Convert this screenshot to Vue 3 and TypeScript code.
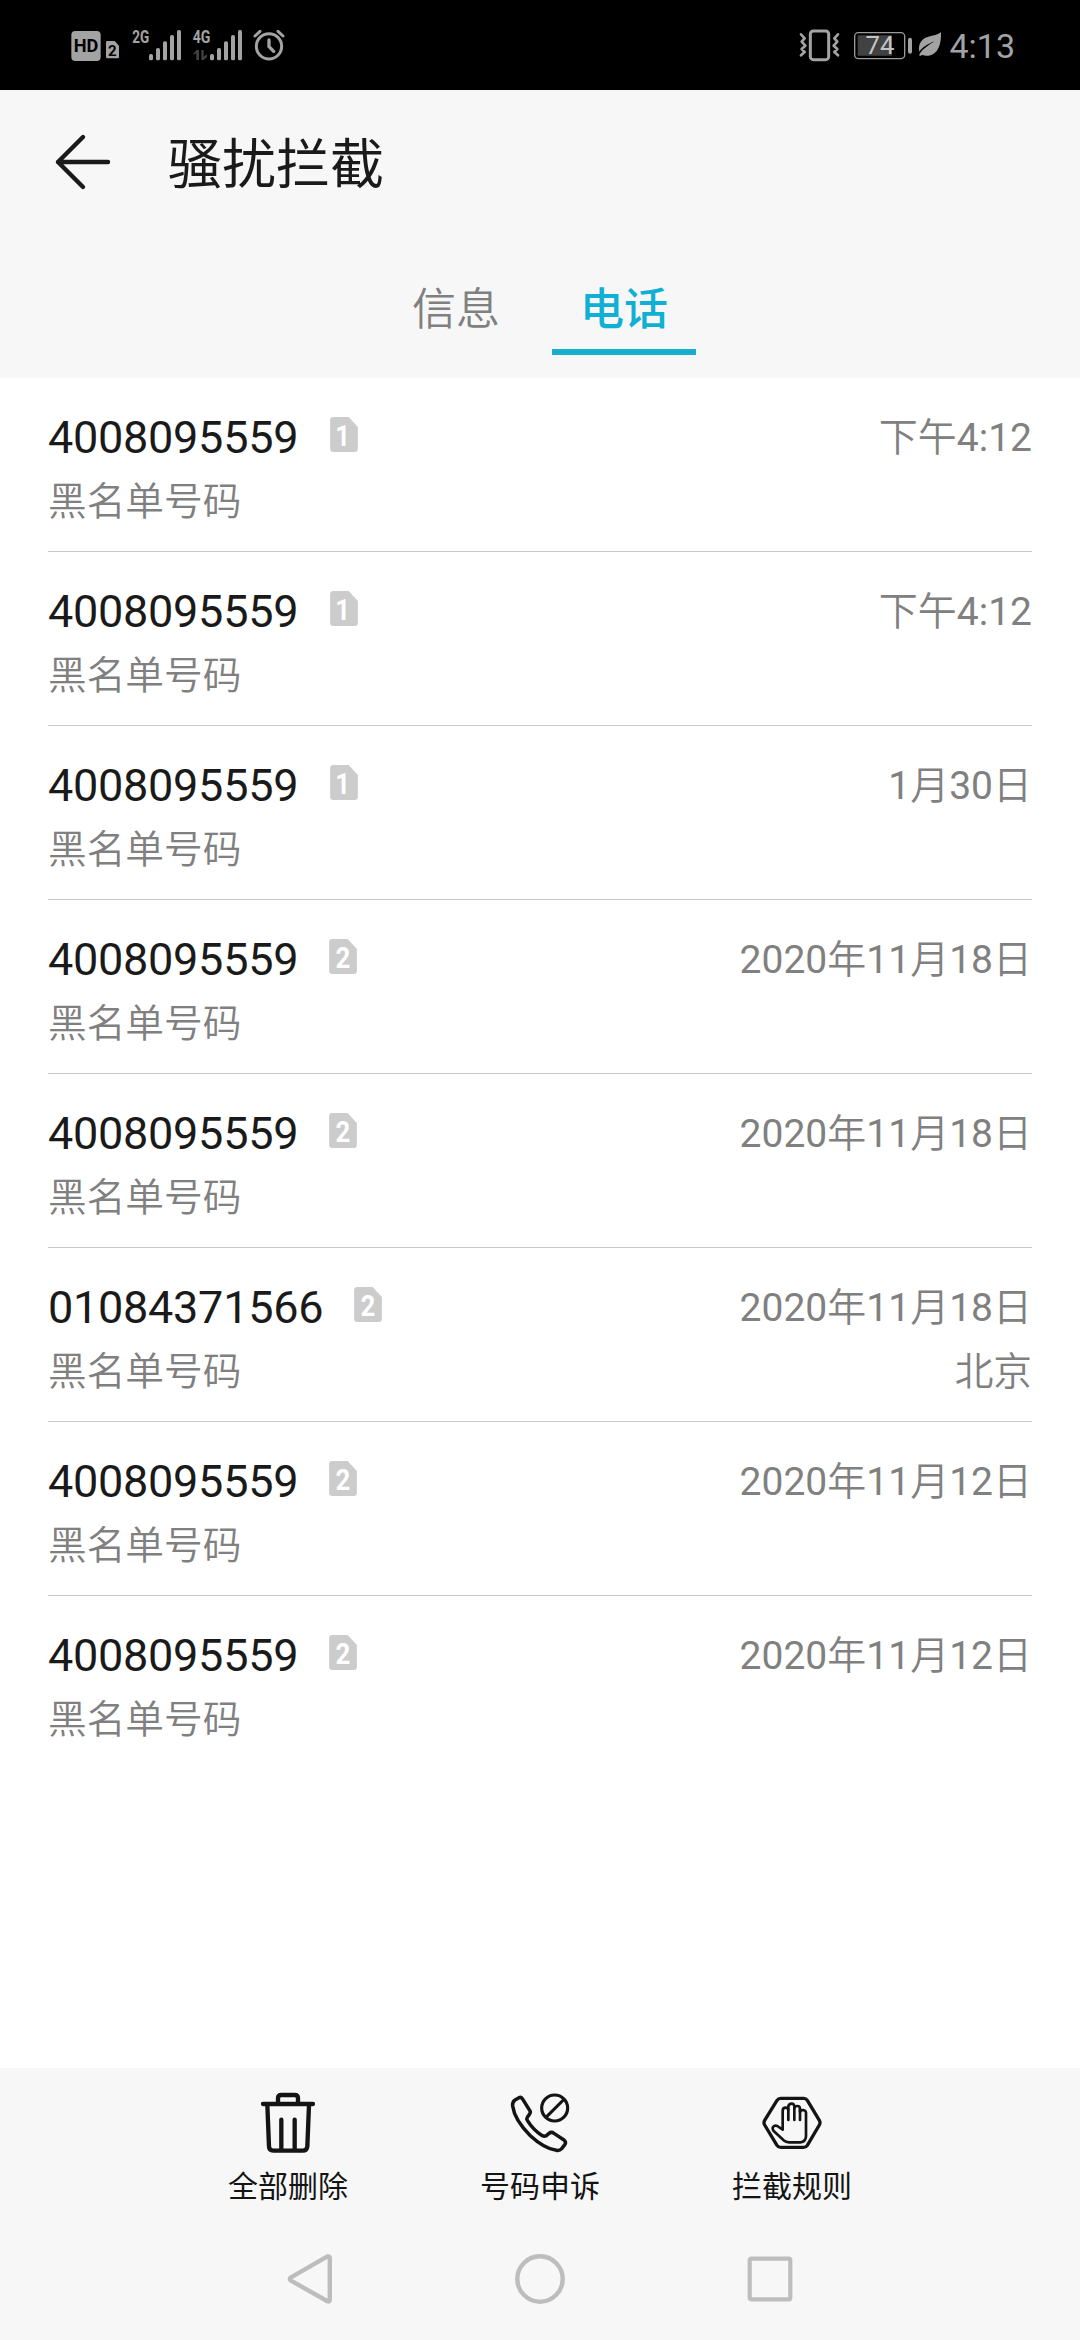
<script setup lang="ts">
interface BlockedCall {
  number: string
  sim: 1 | 2
  reason: string
  time: string
  place?: string
}

const reason = '黑名单号码'
const calls: BlockedCall[] = [
  { number: '4008095559', sim: 1, reason, time: '下午4:12' },
  { number: '4008095559', sim: 1, reason, time: '下午4:12' },
  { number: '4008095559', sim: 1, reason, time: '1月30日' },
  { number: '4008095559', sim: 2, reason, time: '2020年11月18日' },
  { number: '4008095559', sim: 2, reason, time: '2020年11月18日' },
  { number: '01084371566', sim: 2, reason, time: '2020年11月18日', place: '北京' },
  { number: '4008095559', sim: 2, reason, time: '2020年11月12日' },
  { number: '4008095559', sim: 2, reason, time: '2020年11月12日' },
]

// Digits are set in a heavier weight than the Chinese characters around them.
const parts = (time: string): string[] => time.match(/[\d:]+|[^\d:]+/g) ?? []
const isDigits = (part: string): boolean => /^[\d:]/.test(part)

const bars = [
  { x: 0, top: 162 },
  { x: 21, top: 144 },
  { x: 42, top: 124 },
  { x: 63, top: 105 },
  { x: 84, top: 90 },
]
</script>

<template>
  <div class="screen">
    <header class="status">
      <div class="status-left">
        <svg class="hd" viewBox="63 84 90 102">
          <rect x="64" y="93" width="88" height="90" rx="12" fill="#a3a3a3" />
          <text x="108" y="157" text-anchor="middle" font-size="55" font-weight="700" textLength="74" lengthAdjust="spacingAndGlyphs" fill="#000">HD</text>
        </svg>
        <svg class="sim-small" viewBox="165 84 45 102">
          <path d="M172 123h22l13 14v34q0 4-4 4h-31q-4 0-4-4v-44q0-4 4-4z" fill="#a3a3a3" />
          <text x="187" y="167" text-anchor="middle" font-size="45" font-weight="700" fill="#000">2</text>
        </svg>
        <svg class="net net-2g" viewBox="246 84 150 102">
          <text x="247" y="130" font-size="56" font-weight="700" textLength="51" lengthAdjust="spacingAndGlyphs" fill="#a3a3a3">2G</text>
          <rect v-for="b in bars" :key="b.x" :x="297 + b.x" :y="b.top" width="12" :height="181 - b.top" rx="5" fill="#a3a3a3" />
        </svg>
        <svg class="net net-4g" viewBox="426 84 153 102">
          <text x="428" y="130" font-size="56" font-weight="700" textLength="53" lengthAdjust="spacingAndGlyphs" fill="#a3a3a3">4G</text>
          <path d="M430 161l10-11h7v30h-8v-20l-9 4zM454 150h7v20l10-7v8l-10 9h-7z" fill="#404040" />
          <rect v-for="b in bars" :key="b.x" :x="480 + b.x" :y="b.top" width="12" :height="181 - b.top" rx="5" fill="#a3a3a3" />
        </svg>
        <svg class="alarm" viewBox="609 84 96 102" fill="none" stroke="#a3a3a3" stroke-linecap="round" stroke-linejoin="round">
          <circle cx="657" cy="139" r="38" stroke-width="9" />
          <path d="M657 120v20l14 14" stroke-width="10" />
          <path d="M615 108l15-14M699 108l-15-14" stroke-width="9" />
        </svg>
      </div>
      <div class="status-right">
        <svg class="vibrate" viewBox="57 84 123 102" fill="none" stroke="#a3a3a3">
          <rect x="91" y="93" width="55" height="86" rx="9" stroke-width="9" />
          <path d="M63 103l11 12-9 10 11 12-11 10 9 9-11 10M174 103l-11 12 9 10-11 12 11 10-9 9 11 10" stroke-width="8" stroke-linecap="round" stroke-linejoin="round" />
        </svg>
        <svg class="battery" viewBox="219 84 180 102">
          <rect x="224" y="98" width="150" height="78" rx="11" fill="none" stroke="#9a9a9a" stroke-width="4" />
          <rect x="233" y="106" width="103" height="61" rx="2" fill="#414141" />
          <rect x="384" y="113" width="12" height="48" rx="6" fill="#a3a3a3" />
          <text x="300" y="162" text-anchor="middle" font-size="77" fill="#c4c4c4">74</text>
        </svg>
        <svg class="leaf" viewBox="414 84 72 102">
          <path d="M483 97c1 35-8 66-37 70-8 1-13-1-20-2l-6 3c-3-2-2-4-1-6 10-17 28-26 44-38-19 9-36 17-45 31-5-26 9-40 27-45 15-4 28-5 38-13z" fill="#a3a3a3" />
        </svg>
        <span class="clock">4:13</span>
      </div>
    </header>

    <section class="top">
      <div class="title-row">
        <svg class="back" viewBox="0 0 60 60" fill="none" stroke="#1a1a1a" stroke-width="4.4" stroke-linecap="round" stroke-linejoin="round">
          <path d="M55 30H5M30 5L5 30l25 25" />
        </svg>
        <h1>骚扰拦截</h1>
      </div>
      <nav class="tabs">
        <span class="tab">信息</span>
        <span class="tab active">电话</span>
      </nav>
    </section>

    <main class="list">
      <article v-for="(c, i) in calls" :key="i" class="row">
        <div class="line main-line">
          <div class="who">
            <span class="number">{{ c.number }}</span>
            <svg class="sim" :class="{ second: c.sim === 2 }" viewBox="0 0 84 106">
              <path d="M10 0h46l28 30v66q0 10-10 10h-64q-10 0-10-10v-86q0-10 10-10z" fill="#ccc" />
              <text :x="c.sim === 1 ? 38 : 42" y="88" text-anchor="middle" font-size="90" font-weight="700" textLength="45" lengthAdjust="spacingAndGlyphs" fill="#fff">{{ c.sim }}</text>
            </svg>
          </div>
          <span class="time"><span v-for="(part, p) in parts(c.time)" :key="p" :class="{ digits: isDigits(part) }">{{ part }}</span></span>
        </div>
        <div class="line sub-line">
          <span>{{ c.reason }}</span>
          <span v-if="c.place">{{ c.place }}</span>
        </div>
      </article>
    </main>

    <footer class="bottom">
      <div class="actions">
        <button class="action">
          <svg viewBox="138 120 192 198" fill="none" stroke="#141414" stroke-width="13" stroke-linecap="round" stroke-linejoin="round">
            <path d="M159 162H309M204 160V145q0-10 10-10h40q10 0 10 10v15M172 165l5 124q0 13 13 13h88q13 0 14-13l5-124M214 209v91M254 209v91" />
          </svg>
          <span>全部删除</span>
        </button>
        <button class="action">
          <svg viewBox="144 120 192 198" fill="none" stroke="#141414" stroke-width="10.5" stroke-linecap="round" stroke-linejoin="round">
            <path d="M177 143L165 150Q157 155 158 168C162 198 184 230 211 257C238 282 265 297 289 301Q299 303 305 296L315 283Q319 276 312 270L282 250Q274 244 267 250L259 257Q253 260 247 257C229 246 213 229 202 211Q199 206 202 202L209 192Q213 187 209 181L187 146Q183 140 177 143Z" />
            <circle cx="284" cy="174" r="39" stroke-width="9.5" />
            <path d="M260 200L310 150" stroke-width="9.5" />
          </svg>
          <span>号码申诉</span>
        </button>
        <button class="action">
          <svg viewBox="150 120 192 198" fill="none" stroke="#141414" stroke-width="10" stroke-linecap="round" stroke-linejoin="round">
            <path d="M212 145H281Q288 145 292 151L328 211Q332 218 328 225L292 286Q288 292 281 292H212Q205 292 201 286L164 225Q160 218 164 211L201 151Q205 145 212 145Z" />
            <path d="M218 239V182Q219 173 226 173Q234 173 235 180V169Q237 161 245 161Q252 161 253 169V174Q255 168 262 168Q269 168 270 175V186Q272 180 280 180Q287 181 288 188V259Q287 275 271 277H237Q228 276 221 271L191 243Q186 236 189 231Q194 224 202 228L218 239" stroke-width="8" />
            <path d="M235 179V210M253 172V210M270 179V210" stroke-width="8" />
          </svg>
          <span>拦截规则</span>
        </button>
      </div>
      <div class="system-nav">
        <svg viewBox="0 0 50 56" fill="none" stroke="#bdbdbd" stroke-width="4.4" stroke-linejoin="round">
          <path d="M42 5.6Q44.8 4.6 44.8 7.5V48.5Q44.8 51.4 42 50L6 29.6Q3.500 28 6 26.400Z" />
        </svg>
        <svg viewBox="0 0 50 56" fill="none" stroke="#bdbdbd" stroke-width="4.4">
          <circle cx="25" cy="28" r="22.700" />
        </svg>
        <svg viewBox="0 0 50 56" fill="none" stroke="#bdbdbd" stroke-width="4.2">
          <rect x="4.700" y="7.700" width="40.600" height="40.600" rx="1.500" />
        </svg>
      </div>
    </footer>
  </div>
</template>

<style>
body {
  margin: 0;
  background: #fff;
}
</style>

<style scoped>
.screen {
  display: flex;
  flex-direction: column;
  width: 1080px;
  height: 2340px;
  overflow: hidden;
  background: #fff;
  color: #1a1a1a;
  font-family: Roboto, "Noto Sans CJK SC", sans-serif;
}

svg {
  display: block;
  flex: none;
  overflow: visible;
}

.status {
  display: flex;
  justify-content: space-between;
  box-sizing: border-box;
  height: 90px;
  padding: 28px 65px 0 71px;
  background: #000;
}

.status-left,
.status-right {
  display: flex;
  align-items: flex-start;
  height: 34px;
}

.status svg {
  height: 34px;
}

.hd {
  width: 30px;
}

.sim-small {
  width: 15px;
  margin-left: 4px;
}

.net-2g {
  width: 50px;
  margin-left: 12px;
}

.net-4g {
  width: 51px;
  margin-left: 10px;
}

.alarm {
  width: 32px;
  margin-left: 10px;
}

.vibrate {
  width: 41px;
}

.battery {
  width: 60px;
  margin-left: 13px;
}

.leaf {
  width: 24px;
  margin-left: 5px;
}

.clock {
  margin-left: 7px;
  color: #a3a3a3;
  font-size: 34px;
  line-height: 36px;
}

.top {
  box-sizing: border-box;
  height: 288px;
  background: #f7f7f7;
}

.title-row {
  display: flex;
  align-items: center;
  height: 144px;
  padding-left: 53px;
}

.back {
  width: 60px;
  height: 60px;
}

h1 {
  margin: 8px 0 0 55px;
  font-size: 54px;
  font-weight: 400;
  line-height: 80px;
}

.tabs {
  display: flex;
  justify-content: center;
  height: 121px;
  gap: 24px;
}

.tab {
  box-sizing: border-box;
  width: 144px;
  height: 121px;
  padding-top: 43px;
  border-bottom: 6px solid transparent;
  color: #808080;
  font-size: 44px;
  font-weight: 350;
  line-height: 66px;
  text-align: center;
}

.tab.active {
  border-color: #16b0cd;
  color: #0fb0d4;
  font-weight: 500;
}

.list {
  flex: 1;
  padding: 0 48px;
}

.row {
  box-sizing: border-box;
  height: 174px;
  padding-top: 30px;
  border-bottom: 1px solid #c9c9c9;
}

.row:last-child {
  border-bottom: 0;
}

.line {
  display: flex;
  justify-content: space-between;
}

.main-line {
  height: 60px;
  line-height: 60px;
}

.who {
  display: flex;
}

.number {
  font-size: 45px;
  letter-spacing: -0.27px;
}

.sim {
  width: 28px;
  height: 35px;
  margin: 9px 0 0 32px;
}

.sim.second {
  margin-left: 31px;
}

.time {
  color: #808080;
  font-size: 39px;
  font-weight: 350;
}

.digits {
  font-weight: 400;
}

.sub-line {
  height: 60px;
  color: #808080;
  font-size: 38.7px;
  font-weight: 350;
  line-height: 68px;
}

.bottom {
  height: 272px;
  background: #f7f7f7;
}

.actions {
  display: flex;
  justify-content: center;
  height: 162px;
}

.action {
  display: flex;
  flex-direction: column;
  align-items: center;
  width: 252px;
  padding: 22px 0 0;
  border: 0;
  background: none;
  color: #141414;
  font: inherit;
  font-size: 30px;
  line-height: 44px;
}

.action svg {
  width: 64px;
  height: 66px;
  margin-bottom: 9px;
}

.system-nav {
  display: flex;
  justify-content: center;
  gap: 180px;
  padding-top: 21px;
}

.system-nav svg {
  width: 50px;
  height: 56px;
}
</style>
